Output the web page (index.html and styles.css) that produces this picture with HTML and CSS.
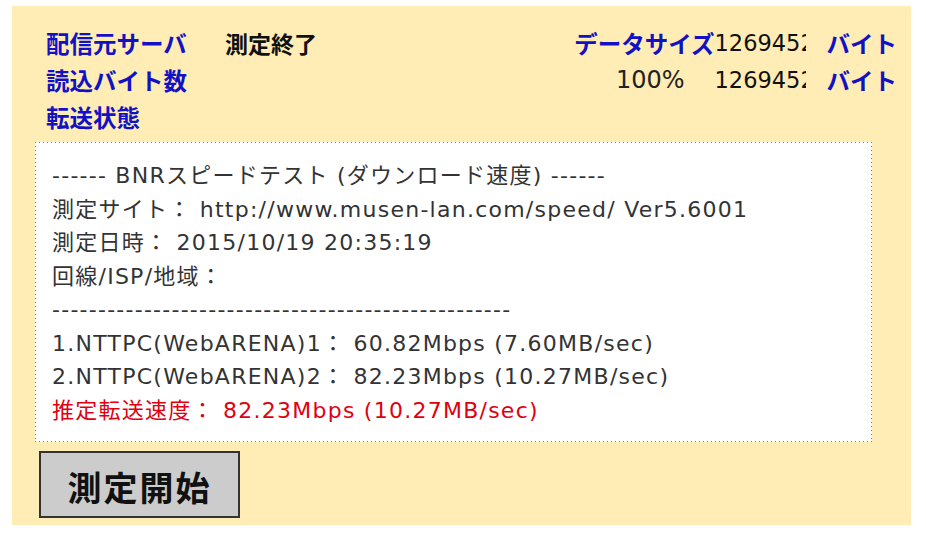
FILE: index.html
```html
<!DOCTYPE html>
<html lang="ja">
<head>
  <meta charset="UTF-8" />
  <meta name="viewport" content="width=device-width, initial-scale=1.0"/>
  <title>BNRスピードテスト</title>
  <link rel="stylesheet" href="styles.css">
</head>
<body>

  <div class="panel">
    <div class="status">
      <div class="status-left">
        <span class="label">配信元サーバ</span>
        <span class="value">測定終了</span>
        <span class="label">読込バイト数</span>
        <span class="value"></span>
        <span class="label">転送状態</span>
        <span class="value"></span>
      </div>
      <div class="status-right">
        <span class="label">データサイズ</span>
        <span class="num">1269452</span>
        <span class="label unit">バイト</span>
        <span class="percent">100%</span>
        <span class="num">1269452</span>
        <span class="label unit">バイト</span>
      </div>
    </div>

    <div class="result">
      <p>------ BNRスピードテスト (ダウンロード速度) ------</p>
      <p>測定サイト： http://www.musen-lan.com/speed/ Ver5.6001</p>
      <p>測定日時： 2015/10/19 20:35:19</p>
      <p>回線/ISP/地域：</p>
      <p>--------------------------------------------------</p>
      <p>1.NTTPC(WebARENA)1： 60.82Mbps (7.60MB/sec)</p>
      <p>2.NTTPC(WebARENA)2： 82.23Mbps (10.27MB/sec)</p>
      <p class="estimate">推定転送速度： 82.23Mbps (10.27MB/sec)</p>
    </div>

    <button id="start-btn">測定開始</button>
  </div>

</body>
</html>
```

FILE: styles.css
```css
body {
  margin: 6px 15px 0 12px;
  font-family: "Noto Sans CJK JP", "Noto Sans", sans-serif;
  background-color: #fff;
  color: #333;
}
.panel {
  background-color: #ffedb5;
  padding: 18px 14px 6px 23px;
  height: 495px;
}
.status {
  display: flex;
  justify-content: space-between;
  padding-left: 11px;
  margin-bottom: 7px;
}
.status-left {
  display: grid;
  grid-template-columns: 179px auto;
  grid-auto-rows: 37px;
  align-items: center;
}
.status-right {
  display: grid;
  grid-template-columns: auto 91px auto;
  grid-auto-rows: 37px;
  align-items: center;
  align-self: flex-start;
}
.label {
  color: #1212c4;
  font-size: 23.5px;
  font-weight: bold;
}
.value {
  color: #111;
  font-size: 23px;
  font-weight: bold;
}
.num,
.percent {
  font-family: "DejaVu Sans", "Noto Sans CJK JP", sans-serif;
  font-size: 22.5px;
  color: #111;
}
.num {
  overflow: hidden;
  white-space: nowrap;
}
.unit {
  margin-left: 21px;
}
.percent {
  color: #222;
  font-size: 24px;
  text-align: right;
  padding-right: 30px;
}
.result {
  width: 837px;
  padding: 17px 0 15px 17px;
  box-sizing: border-box;
  background:
    repeating-linear-gradient(to right, #777 0 1px, transparent 1px 4px) top left / 100% 1px no-repeat,
    repeating-linear-gradient(to right, #777 0 1px, transparent 1px 4px) bottom left / 100% 1px no-repeat,
    repeating-linear-gradient(to bottom, #777 0 1px, transparent 1px 4px) top left / 1px 100% no-repeat,
    repeating-linear-gradient(to bottom, #777 0 1px, transparent 1px 4px) top right / 1px 100% no-repeat,
    #fff;
}
.result p {
  margin: 0;
  font-family: "DejaVu Sans", "Noto Sans CJK JP", sans-serif;
  font-size: 22px;
  letter-spacing: 1.25px;
  line-height: 33.5px;
  white-space: nowrap;
}
.result .estimate {
  color: #e00010;
}
#start-btn {
  margin: 9px 0 0 4px;
  width: 201px;
  height: 67px;
  padding: 4px 0 0;
  background-color: #ccc;
  border: 2px solid #333;
  font-family: "Noto Sans CJK JP", sans-serif;
  font-size: 34px;
  font-weight: bold;
  color: #111;
  letter-spacing: 2px;
}
```
